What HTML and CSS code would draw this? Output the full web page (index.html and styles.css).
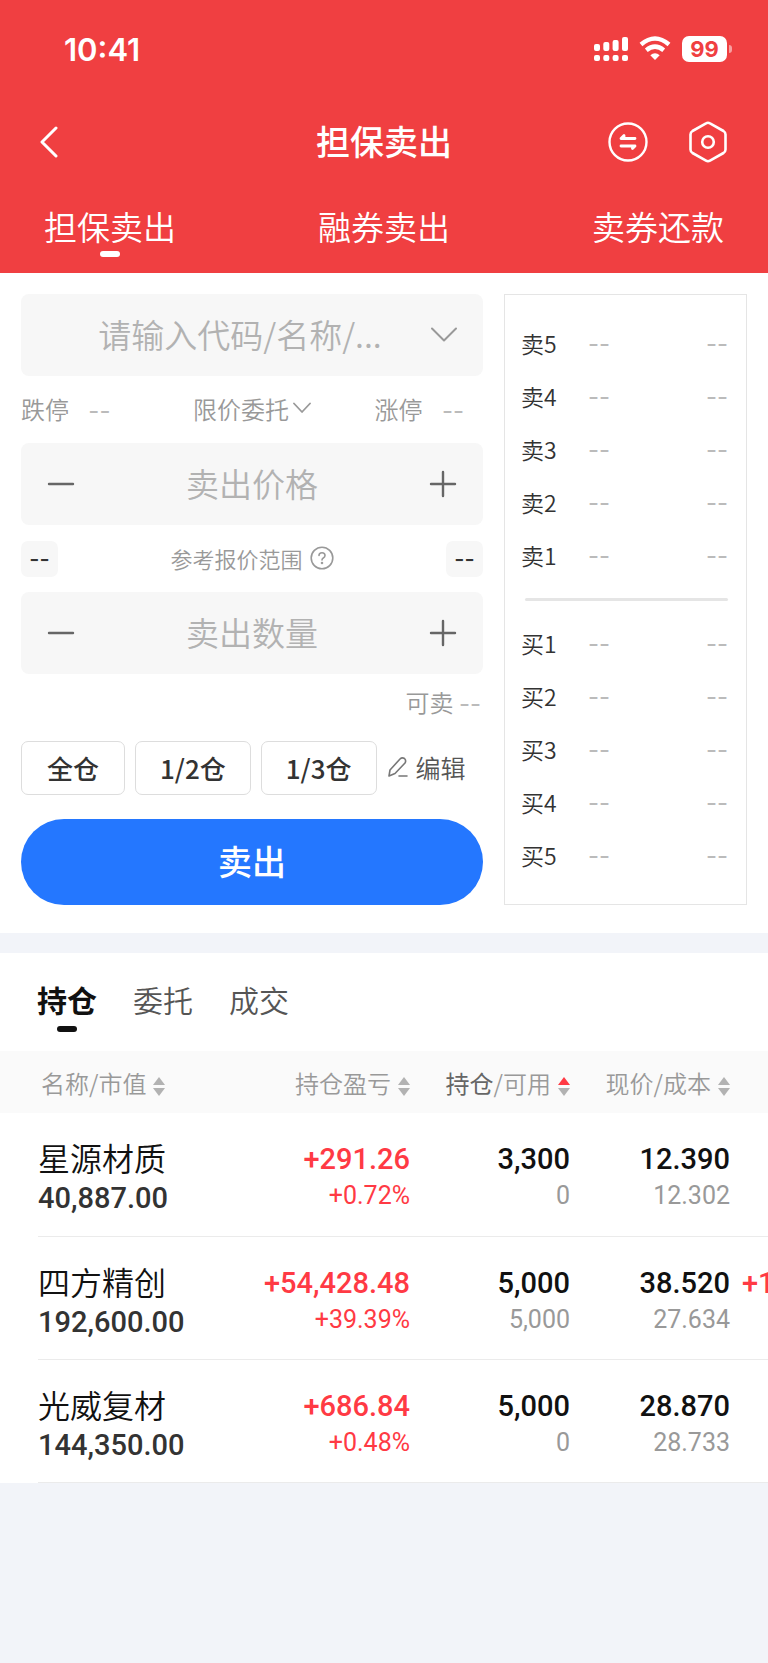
FILE: index.html
```
<!DOCTYPE html>
<html lang="zh-CN">
<head>
    <meta charset="UTF-8">
    <meta name="viewport" content="width=device-width, initial-scale=1.0">
    <title>担保卖出</title>
    <link rel="stylesheet" href="styles.css">
</head>
<body>
    <header class="header">
        <div class="status-bar">
            <span class="time">10:41</span>
            <div class="status-icons">
                <svg width="34" height="26" viewBox="0 0 34 26" fill="#fff">
                    <rect x="0" y="8" width="6" height="7" rx="2"/>
                    <rect x="9.3" y="6" width="6" height="9" rx="2"/>
                    <rect x="18.6" y="4" width="6" height="11" rx="2"/>
                    <rect x="28" y="1" width="6" height="14" rx="2"/>
                    <rect x="0" y="19" width="6" height="6" rx="2"/>
                    <rect x="9.3" y="19" width="6" height="6" rx="2"/>
                    <rect x="18.6" y="19" width="6" height="6" rx="2"/>
                    <rect x="28" y="19" width="6" height="6" rx="2"/>
                </svg>
                <svg width="32" height="26" viewBox="0 0 32 26">
                    <path d="M2 8.5Q16-3.5 30 8.5" fill="none" stroke="#fff" stroke-width="4.4"/>
                    <path d="M7.3 14.2Q16 7 24.7 14.2" fill="none" stroke="#fff" stroke-width="4.4"/>
                    <path d="M11.3 19.2Q16 15.2 20.7 19.2L16 24Z" fill="#fff"/>
                </svg>
                <span class="battery">99</span>
            </div>
        </div>

        <div class="nav-bar">
            <button class="icon-btn back" aria-label="返回">
                <svg width="18" height="32" viewBox="0 0 18 32" fill="none" stroke="#fff" stroke-width="3" stroke-linecap="round" stroke-linejoin="round"><path d="M16 2L2 16L16 30"/></svg>
            </button>
            <h1>担保卖出</h1>
            <div class="nav-actions">
                <button class="icon-btn" aria-label="切换">
                    <svg width="40" height="42" viewBox="0 0 40 42" fill="none" stroke="#fff" stroke-width="2.4" stroke-linecap="round" stroke-linejoin="round">
                        <circle cx="20" cy="21" r="18.5"/>
                        <path d="M27 17.500H13L16 14.500V17M13 25H27L24.500 27.500V25" stroke-width="2.800"/>
                    </svg>
                </button>
                <button class="icon-btn" aria-label="设置">
                    <svg width="40" height="42" viewBox="0 0 40 42" fill="none" stroke="#fff" stroke-width="2.6" stroke-linejoin="round">
                        <path d="M18 2.4Q20 1.2 22 2.4L35.5 10Q37.5 11.2 37.5 13.5V28.5Q37.5 30.8 35.5 32L22 39.6Q20 40.8 18 39.6L4.5 32Q2.5 30.8 2.5 28.5V13.5Q2.5 11.2 4.5 10Z"/>
                        <circle cx="20" cy="21" r="5.8"/>
                    </svg>
                </button>
            </div>
        </div>

        <nav class="top-tabs">
            <a href="#" class="active">担保卖出</a>
            <a href="#">融券卖出</a>
            <a href="#">卖券还款</a>
        </nav>
    </header>

    <main>
        <section class="trade">
            <form class="order-form" onsubmit="return false">
                <div class="field search">
                    <input type="text" placeholder="请输入代码/名称/..." aria-label="股票代码">
                    <button type="button" class="icon-btn" aria-label="展开">
                        <svg width="26" height="16" viewBox="0 0 26 16" fill="none" stroke="#999" stroke-width="2" stroke-linecap="round" stroke-linejoin="round"><path d="M1 1.5L13 13.5L25 1.5"/></svg>
                    </button>
                </div>

                <div class="limits">
                    <span>跌停 <i class="dash">--</i></span>
                    <button type="button" class="order-type">限价委托<svg width="18" height="12" viewBox="0 0 18 12" fill="none" stroke="#999" stroke-width="1.8" stroke-linecap="round" stroke-linejoin="round"><path d="M1 1.5L9 10L17 1.5"/></svg></button>
                    <span class="limit-up">涨停 <i class="dash">--</i></span>
                </div>

                <div class="field stepper">
                    <button type="button" class="icon-btn" aria-label="减少价格"><svg width="28" height="28" viewBox="0 0 28 28" stroke="#666" stroke-width="2.4" stroke-linecap="round"><path d="M2 14H26"/></svg></button>
                    <input type="text" placeholder="卖出价格" aria-label="卖出价格">
                    <button type="button" class="icon-btn" aria-label="增加价格"><svg width="28" height="28" viewBox="0 0 28 28" stroke="#666" stroke-width="2.4" stroke-linecap="round"><path d="M2 14H26M14 2V26"/></svg></button>
                </div>

                <div class="range">
                    <span class="pill">--</span>
                    <span class="range-label">参考报价范围
                        <svg width="24" height="24" viewBox="0 0 24 24" fill="none" stroke="#999" stroke-width="1.6" stroke-linecap="round"><circle cx="12" cy="12" r="10.8"/><path d="M9 9.5Q9 6.8 12 6.8T15 9.5Q15 11 13.3 12Q12 12.8 12 14"/><circle cx="12" cy="17" r="0.5"/></svg>
                    </span>
                    <span class="pill">--</span>
                </div>

                <div class="field stepper">
                    <button type="button" class="icon-btn" aria-label="减少数量"><svg width="28" height="28" viewBox="0 0 28 28" stroke="#666" stroke-width="2.4" stroke-linecap="round"><path d="M2 14H26"/></svg></button>
                    <input type="text" placeholder="卖出数量" aria-label="卖出数量">
                    <button type="button" class="icon-btn" aria-label="增加数量"><svg width="28" height="28" viewBox="0 0 28 28" stroke="#666" stroke-width="2.4" stroke-linecap="round"><path d="M2 14H26M14 2V26"/></svg></button>
                </div>

                <div class="available">可卖 <i class="dash">--</i></div>

                <div class="quick">
                    <button type="button" class="portion">全仓</button>
                    <button type="button" class="portion">1/2仓</button>
                    <button type="button" class="portion">1/3仓</button>
                    <button type="button" class="edit"><svg width="22" height="22" viewBox="0 0 22 22" fill="none" stroke="#777" stroke-width="1.6" stroke-linecap="round" stroke-linejoin="round"><path d="M2 20L3 14L13 3Q15 1 17.5 2.5Q19.5 4.5 18 7L8 17.5ZM12 20H20"/></svg>编辑</button>
                </div>

                <button type="submit" class="submit">卖出</button>
            </form>

            <div class="order-book">
                <div class="level"><span>卖5</span><i class="dash">--</i><i class="dash">--</i></div>
                <div class="level"><span>卖4</span><i class="dash">--</i><i class="dash">--</i></div>
                <div class="level"><span>卖3</span><i class="dash">--</i><i class="dash">--</i></div>
                <div class="level"><span>卖2</span><i class="dash">--</i><i class="dash">--</i></div>
                <div class="level"><span>卖1</span><i class="dash">--</i><i class="dash">--</i></div>
                <div class="ratio"></div>
                <div class="level"><span>买1</span><i class="dash">--</i><i class="dash">--</i></div>
                <div class="level"><span>买2</span><i class="dash">--</i><i class="dash">--</i></div>
                <div class="level"><span>买3</span><i class="dash">--</i><i class="dash">--</i></div>
                <div class="level"><span>买4</span><i class="dash">--</i><i class="dash">--</i></div>
                <div class="level"><span>买5</span><i class="dash">--</i><i class="dash">--</i></div>
            </div>
        </section>

        <section class="holdings">
            <nav class="list-tabs">
                <a href="#" class="active">持仓</a>
                <a href="#">委托</a>
                <a href="#">成交</a>
            </nav>

            <div class="table-wrap">
                <table>
                    <thead>
                        <tr>
                            <th class="col-name">名称/市值<span class="sort"></span></th>
                            <th class="col-profit">持仓盈亏<span class="sort"></span></th>
                            <th class="col-num"><b>持仓</b>/可用<span class="sort up"></span></th>
                            <th class="col-num">现价/成本<span class="sort"></span></th>
                            <th class="col-more"></th>
                        </tr>
                    </thead>
                    <tbody>
                        <tr>
                            <td><div class="name">星源材质</div><div class="value">40,887.00</div></td>
                            <td class="red"><div class="main">+291.26</div><div class="sub">+0.72%</div></td>
                            <td><div class="main">3,300</div><div class="sub">0</div></td>
                            <td><div class="main">12.390</div><div class="sub">12.302</div></td>
                            <td></td>
                        </tr>
                        <tr>
                            <td><div class="name">四方精创</div><div class="value">192,600.00</div></td>
                            <td class="red"><div class="main">+54,428.48</div><div class="sub">+39.39%</div></td>
                            <td><div class="main">5,000</div><div class="sub">5,000</div></td>
                            <td><div class="main">38.520</div><div class="sub">27.634</div></td>
                            <td class="red more"><div class="main">+1</div></td>
                        </tr>
                        <tr>
                            <td><div class="name">光威复材</div><div class="value">144,350.00</div></td>
                            <td class="red"><div class="main">+686.84</div><div class="sub">+0.48%</div></td>
                            <td><div class="main">5,000</div><div class="sub">0</div></td>
                            <td><div class="main">28.870</div><div class="sub">28.733</div></td>
                            <td></td>
                        </tr>
                    </tbody>
                </table>
            </div>
        </section>
    </main>
</body>
</html>
```
FILE: styles.css
```
* {
    box-sizing: border-box;
}

body {
    margin: 0;
    background-color: #f2f4f9;
    color: #111;
    font-family: "Noto Sans CJK SC", sans-serif;
    font-weight: 350;
    overflow-x: hidden;
}

button, input {
    font-family: inherit;
    font-weight: inherit;
    border: none;
    background: none;
    padding: 0;
    margin: 0;
}

button {
    cursor: pointer;
}

a {
    color: inherit;
    text-decoration: none;
}

svg {
    display: block;
    flex: none;
}

.icon-btn {
    display: flex;
    flex: none;
}

/* Cabeçalho */
.header {
    background-color: #f03f41;
    color: #fff;
}

.status-bar {
    display: flex;
    justify-content: space-between;
    align-items: center;
    height: 98px;
    padding: 0 36px 0 64px;
}

.time {
    padding-top: 1px;
    font: 600 31px/36px Inter, sans-serif;
}

.status-icons {
    display: flex;
    align-items: center;
    gap: 11px;
}

.battery {
    position: relative;
    width: 45px;
    height: 26px;
    margin-right: 5px;
    border-radius: 7px;
    background-color: #fff;
    color: #f03f41;
    font: 700 22px/26px Inter, sans-serif;
    text-align: center;
}

.battery::after {
    content: "";
    position: absolute;
    right: -5px;
    top: 9px;
    width: 3px;
    height: 8px;
    border-radius: 0 3px 3px 0;
    background-color: rgba(255, 255, 255, 0.5);
}

.nav-bar {
    display: grid;
    grid-template-columns: 1fr auto 1fr;
    align-items: center;
    height: 88px;
    padding: 0 40px;
}

.nav-bar h1 {
    margin: 0;
    padding-bottom: 2px;
    font-size: 34px;
    font-weight: 500;
    line-height: 48px;
}

.nav-actions {
    display: flex;
    justify-content: flex-end;
    gap: 40px;
}

.top-tabs {
    display: flex;
    justify-content: space-between;
    height: 87px;
    padding: 16px 44px 0;
    font-size: 33px;
    line-height: 48px;
}

.top-tabs a, .list-tabs a {
    position: relative;
}

.active::after {
    content: "";
    position: absolute;
    left: 50%;
    bottom: 0;
    width: 20px;
    height: 6px;
    margin-left: -10px;
    border-radius: 3px;
    background-color: currentColor;
}

.top-tabs a {
    height: 55px;
}

/* Formulário de venda */
.trade {
    display: flex;
    gap: 21px;
    padding: 21px 21px 28px;
    background-color: #fff;
}

.order-form {
    flex: 1;
    min-width: 0;
}

.field {
    display: flex;
    align-items: center;
    height: 82px;
    border-radius: 8px;
    background-color: #f7f7f7;
}

.field input {
    flex: 1;
    min-width: 0;
    height: 52px;
    padding-bottom: 3px;
    font-size: 33px;
    text-align: center;
    color: #333;
    outline: none;
}

.field input::placeholder {
    color: #b2b2b2;
    opacity: 1;
}

.search {
    padding: 0 26px 0 28px;
}

.stepper {
    padding: 0 26px;
}

.dash {
    font-family: Inter, sans-serif;
    font-style: normal;
    font-size: 24px;
    font-weight: 400;
    color: #bbb;
}

.limits {
    display: grid;
    grid-template-columns: 1fr auto 1fr;
    align-items: center;
    height: 67px;
    padding-bottom: 3px;
    font-size: 24px;
    color: #999;
}

.limits .dash {
    margin-left: 14px;
}

.limit-up {
    text-align: right;
    padding-right: 19px;
}

.order-type {
    display: flex;
    align-items: center;
    gap: 4px;
    font-size: 24px;
    color: #999;
}

.range {
    display: flex;
    justify-content: space-between;
    align-items: center;
    height: 67px;
}

.pill {
    width: 37px;
    height: 36px;
    border-radius: 7px;
    background-color: #f7f7f7;
    color: #333;
    font: 500 22px/36px Inter, sans-serif;
    text-align: center;
}

.range-label {
    display: flex;
    align-items: center;
    gap: 7px;
    padding-bottom: 2px;
    font-size: 22px;
    color: #999;
}

.available {
    height: 67px;
    padding-right: 2px;
    font-size: 24px;
    line-height: 56px;
    text-align: right;
    color: #999;
}

.quick {
    display: flex;
    gap: 10px;
}

.portion {
    height: 54px;
    min-width: 104px;
    padding: 0 24px 2px;
    border: 1px solid #ddd;
    border-radius: 7px;
    font-size: 26px;
    font-weight: 500;
    color: #333;
}

.edit {
    display: flex;
    align-items: center;
    gap: 7px;
    padding-bottom: 2px;
    font-size: 25px;
    color: #555;
}

.submit {
    width: 100%;
    height: 86px;
    margin-top: 24px;
    padding-bottom: 3px;
    border-radius: 43px;
    background-color: #2477ff;
    color: #fff;
    font-size: 34px;
    font-weight: 500;
}

/* Cinco níveis de compra e venda */
.order-book {
    width: 243px;
    padding: 22px 18px 0 16px;
    border: 1px solid #e5e5e5;
}

.level {
    display: grid;
    grid-template-columns: 67px 1fr auto;
    align-items: center;
    height: 53px;
    font-size: 23px;
    color: #333;
}

.level span {
    padding-bottom: 2px;
}

.ratio {
    height: 3px;
    margin: 16px 0 16px 4px;
    border-radius: 2px;
    background-color: #e5e5e5;
}

/* Posições */
.holdings {
    margin-top: 20px;
    background-color: #fff;
}

.list-tabs {
    display: flex;
    gap: 36px;
    height: 98px;
    padding: 23px 37px 0;
    font-size: 30px;
    line-height: 46px;
    color: #555;
}

.list-tabs a {
    height: 56px;
}

.list-tabs .active {
    color: #111;
    font-weight: 700;
}

.table-wrap {
    padding-left: 38px;
    overflow: hidden;
}

table {
    width: 100%;
    table-layout: fixed;
    border-collapse: collapse;
}

th, td {
    padding: 0;
    text-align: right;
    white-space: nowrap;
}

th {
    height: 62px;
    background-color: #fafafa;
    font-size: 24px;
    font-weight: 350;
    color: #999;
}

th b {
    font-weight: 400;
    color: #666;
}

th:first-child {
    padding-left: 3px;
    box-shadow: -38px 0 0 #fafafa;
}

th:first-child, td:first-child {
    text-align: left;
}

.col-profit {
    width: 200px;
}

.col-num {
    width: 160px;
}

.col-more {
    width: 38px;
}

.sort {
    display: inline-flex;
    flex-direction: column;
    gap: 3px;
    margin-left: 7px;
    vertical-align: 8px;
}

.sort::before, .sort::after {
    content: "";
    border: 6px solid transparent;
}

.sort::before {
    border-top: none;
    border-bottom: 8px solid #b2b2b2;
}

.sort::after {
    border-bottom: none;
    border-top: 8px solid #b2b2b2;
}

.sort.up::before {
    border-bottom-color: #ff3a44;
}

td {
    height: 123px;
    padding-top: 27px;
    border-bottom: 1px solid #ebebeb;
    font-family: Roboto, "Noto Sans CJK SC", sans-serif;
    vertical-align: top;
}

.name {
    font-family: "Noto Sans CJK SC", sans-serif;
    font-size: 32px;
    font-weight: 350;
    line-height: 34px;
}

.value {
    font-size: 29px;
    font-weight: 500;
    line-height: 48px;
    color: #333;
}

.main {
    font-size: 29px;
    font-weight: 500;
    line-height: 38px;
}

.sub {
    font-size: 25px;
    font-weight: 400;
    line-height: 36px;
    color: #999;
}

.red, .red .sub {
    color: #ff3a44;
}

.more {
    padding-left: 12px;
    text-align: left;
}
```
